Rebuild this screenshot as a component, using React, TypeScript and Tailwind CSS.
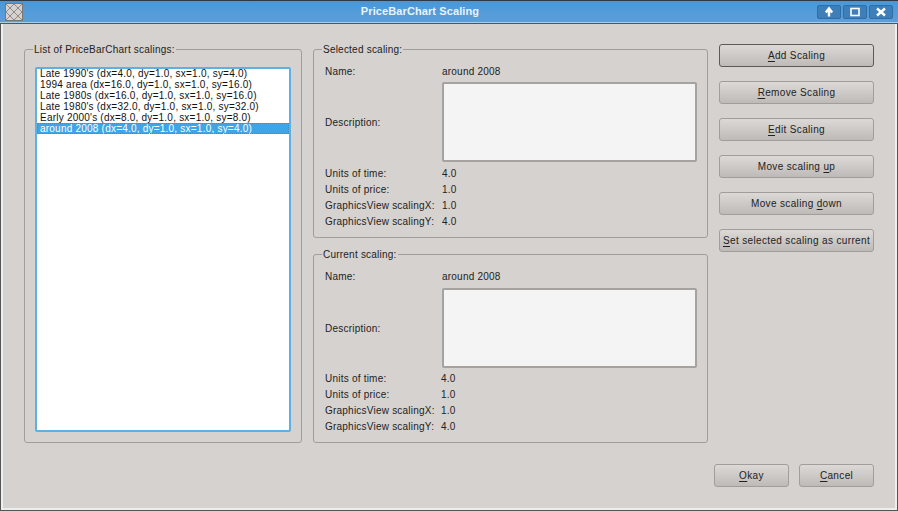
import React from "react";

const font = { fontFamily: '"Liberation Sans", Arial, sans-serif' };

function U({ children }: { children: React.ReactNode }) {
  return <span className="underline underline-offset-2">{children}</span>;
}

function Btn({ children, strong, className }: { children: React.ReactNode; strong?: boolean; className: string }) {
  return (
    <button
      className={`h-[23px] shrink-0 rounded-[3px] border ${strong ? "border-[#5c5a58]" : "border-[#a09d9a]"} bg-gradient-to-b from-[#dcd9d6] to-[#bdbab7] text-[10px] tracking-[0.35px] text-[#222] whitespace-nowrap ${className}`}
    >
      {children}
    </button>
  );
}

function Info({ title, boxClass, rowsClass, labelClass }: { title: string; boxClass: string; rowsClass: string; labelClass: string }) {
  const rows = [
    ["Units of time:", "4.0"],
    ["Units of price:", "1.0"],
    ["GraphicsView scalingX:", "1.0"],
    ["GraphicsView scalingY:", "4.0"],
  ];
  return (
    <fieldset className="h-[195px] shrink-0 rounded-[3px] border border-[#a09d9a] pl-[11px] pr-[10px]">
      <legend className="-ml-[3px] h-[13px] px-[1px] leading-[13px]">{title}</legend>
      <div className="mt-[9px] flex h-[13px] items-center">
        <span className="w-[117px] shrink-0">Name:</span>
        <span>around 2008</span>
      </div>
      <div className={`flex h-[80px] items-center ${boxClass}`}>
        <span className="w-[117px] shrink-0">Description:</span>
        <div className="h-full w-[255px] rounded-[2px] border-2 border-[#a5a2a0] bg-[#f4f4f4]" />
      </div>
      <div className={`flex flex-col ${rowsClass}`}>
        {rows.map(([a, b]) => (
          <div key={a} className="flex h-[16px] items-center">
            <span className={`shrink-0 whitespace-nowrap ${labelClass}`}>{a}</span>
            <span>{b}</span>
          </div>
        ))}
      </div>
    </fieldset>
  );
}

export default function App() {
  const items = [
    "Late 1990's (dx=4.0, dy=1.0, sx=1.0, sy=4.0)",
    "1994 area (dx=16.0, dy=1.0, sx=1.0, sy=16.0)",
    "Late 1980s (dx=16.0, dy=1.0, sx=1.0, sy=16.0)",
    "Late 1980's (dx=32.0, dy=1.0, sx=1.0, sy=32.0)",
    "Early 2000's (dx=8.0, dy=1.0, sx=1.0, sy=8.0)",
    "around 2008 (dx=4.0, dy=1.0, sx=1.0, sy=4.0)",
  ];
  return (
    <div style={font} className="flex h-[511px] w-[898px] flex-col overflow-hidden bg-[#d6d2cf] text-[10px] tracking-[0.22px] text-[#222]">
      <div className="flex h-[23px] shrink-0 items-center border-t border-b border-t-[#2b3a4a] border-b-[#a8cdea] bg-gradient-to-b from-[#4a97d6] to-[#5b9fdc] px-[5px]">
        <svg width="18" height="18" viewBox="0 0 18 18" className="shrink-0">
          <rect x="0.5" y="0.5" width="17" height="17" fill="#d6d2cf" stroke="#777" />
          <path d="M1 1L17 17M17 1L1 17M9 1L17 9L9 17L1 9Z" stroke="#8e8a88" fill="none" />
        </svg>
        <div className="flex-1 text-center text-[11px] font-bold tracking-[0.1px] text-[#eaf3fb]">PriceBarChart Scaling</div>
        <div className="flex gap-[2px]">
          {[
            <path key="a" d="M7 11.5V5.5M3.8 7.5L7 3.5L10.2 7.5" stroke="#fff" strokeWidth="2.4" fill="none" />,
            <rect key="b" x="3" y="3.5" width="8" height="7" stroke="#fff" strokeWidth="1.6" fill="none" />,
            <path key="c" d="M3 3.5L11 10.5M11 3.5L3 10.5" stroke="#fff" strokeWidth="2.4" fill="none" />,
          ].map((p, i) => (
            <div key={i} className="flex h-[14px] w-[24px] items-center justify-center rounded-[2px] border border-[#2f6da3] bg-[#3f7fb9]">
              <svg width="14" height="14" viewBox="0 0 14 14">{p}</svg>
            </div>
          ))}
        </div>
      </div>

      <div className="flex flex-1 flex-col border-x-[3px] border-b-[3px] border-[#f0eeec] outline-1 -outline-offset-1 outline-[#555] px-[21px]">
        <div className="mt-[20px] flex">
          <fieldset className="h-[400px] w-[278px] shrink-0 rounded-[3px] border border-[#a09d9a] pl-[10px]">
            <legend className="-ml-[2px] h-[13px] px-[1px] leading-[13px]">List of PriceBarChart scalings:</legend>
            <div className="mt-[11px] h-[365px] w-[256px] rounded-[2px] border-2 border-[#5eb0e3] bg-white text-[#111]">
              <div className="-mt-[1px]">
                {items.map((t, i) => (
                  <div key={t} className={`h-[11px] whitespace-nowrap pl-[3px] leading-[11px] ${i === 5 ? "bg-[#3fa5e6] text-white outline-1 -outline-offset-1 outline-dotted outline-[#a8714a]" : ""}`}>
                    {t}
                  </div>
                ))}
              </div>
            </div>
          </fieldset>

          <div className="ml-[11px] flex w-[395px] shrink-0 flex-col gap-[10px]">
            <Info title="Selected scaling:" boxClass="mt-[4px]" rowsClass="mt-[3px]" labelClass="w-[117px]" />
            <Info title="Current scaling:" boxClass="mt-[5px]" rowsClass="mt-[2px]" labelClass="w-[116px]" />
          </div>

          <div className="ml-[11px] mt-[1px] flex w-[155px] shrink-0 flex-col gap-[14px]">
            <Btn strong className="w-full"><U>A</U>dd Scaling</Btn>
            <Btn className="w-full"><U>R</U>emove Scaling</Btn>
            <Btn className="w-full"><U>E</U>dit Scaling</Btn>
            <Btn className="w-full">Move scaling <U>u</U>p</Btn>
            <Btn className="w-full">Move scaling <U>d</U>own</Btn>
            <Btn className="w-full"><U>S</U>et selected scaling as current</Btn>
          </div>
        </div>
        <div className="mt-[21px] flex justify-end gap-[10px]">
          <Btn className="w-[75px]"><U>O</U>kay</Btn>
          <Btn className="w-[75px]"><U>C</U>ancel</Btn>
        </div>
      </div>
    </div>
  );
}
